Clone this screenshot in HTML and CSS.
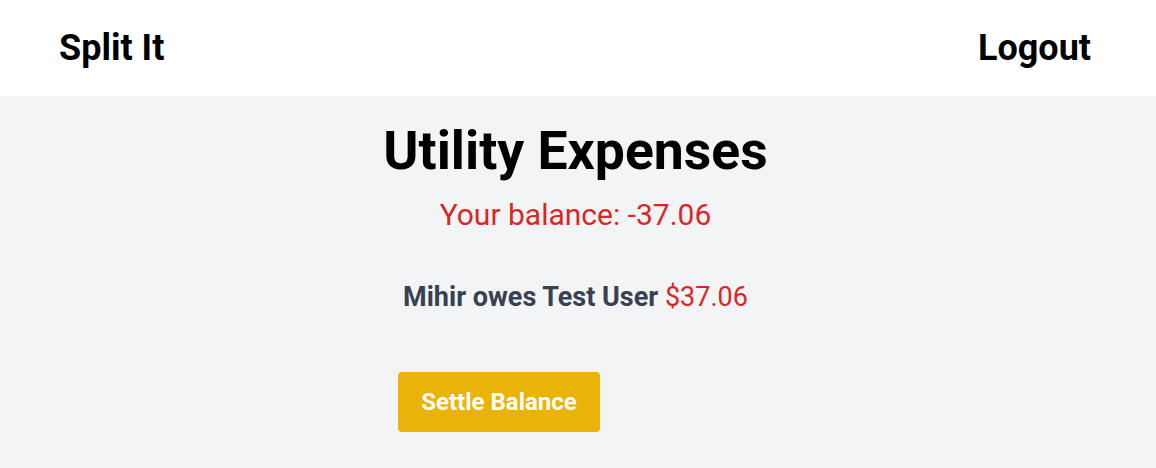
FILE: index.html
```html
<!DOCTYPE html>
<html>
<head>
<meta charset="utf-8">
<link rel="stylesheet" href="styles.css">
</head>
<body>
<header class="topbar">
  <div class="brand">Split It</div>
  <div class="logout">Logout</div>
</header>
<main class="content">
  <h1 class="title">Utility Expenses</h1>
  <p class="balance">Your balance: -37.06</p>
  <p class="debt"><span class="debt-text">Mihir owes Test User</span> <span class="amount">$37.06</span></p>
  <div class="actions">
    <button class="settle">Settle Balance</button>
  </div>
</main>
</body>
</html>
```

FILE: styles.css
```css
html, body {
  margin: 0;
  padding: 0;
}
body {
  font-family: Roboto, "Liberation Sans", sans-serif;
  background: #f3f4f6;
  height: 468px;
  overflow: hidden;
}
.topbar {
  height: 96px;
  background: #ffffff;
  display: flex;
  align-items: center;
  justify-content: space-between;
  padding: 0 65px 0 59px;
}
.brand, .logout {
  font-size: 36px;
  line-height: 40px;
  font-weight: 700;
  color: #000;
}
.content {
  display: flex;
  flex-direction: column;
  align-items: center;
  padding-right: 5px;
}
.title {
  margin: 23px 0 0;
  font-size: 53.5px;
  font-weight: 700;
  line-height: 1.2;
  color: #000;
}
.balance {
  margin: 14px 0 0;
  font-size: 30px;
  line-height: 36px;
  color: #dc2626;
}
.debt {
  margin: 46px 0 0;
  font-size: 27px;
  line-height: 36px;
}
.debt-text {
  font-weight: 700;
  color: #374151;
}
.amount {
  color: #dc2626;
}
.actions {
  width: 355px;
  margin-top: 57px;
  display: flex;
}
.settle {
  width: 202px;
  height: 60px;
  border: none;
  border-radius: 4px;
  background: #eab308;
  color: #fff;
  font-family: Roboto, "Liberation Sans", sans-serif;
  font-size: 24px;
  font-weight: 700;
}
```
